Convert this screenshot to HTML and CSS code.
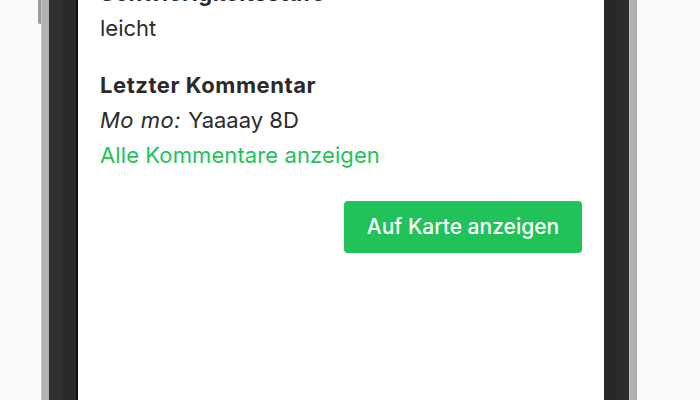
FILE: index.html
```html
<!DOCTYPE html>
<html lang="de">
<head>
<meta charset="utf-8">
<title>Details</title>
<link rel="stylesheet" href="styles.css">
</head>
<body>
<div class="stage">
  <div class="phone">
    <span class="side-button"></span>
    <div class="screen">
      <div class="content">
        <section class="field">
          <h3 class="label">Schwierigkeitsstufe</h3>
          <p class="value">leicht</p>
        </section>
        <section class="field field-comment">
          <h3 class="label">Letzter Kommentar</h3>
          <p class="value"><em class="author">Mo mo:</em> Yaaaay 8D</p>
          <a class="link" href="#">Alle Kommentare anzeigen</a>
        </section>
        <div class="actions">
          <button class="btn" type="button">Auf Karte anzeigen</button>
        </div>
      </div>
    </div>
  </div>
</div>
</body>
</html>
```

FILE: styles.css
```css
html, body {
  margin: 0;
  padding: 0;
  height: 100%;
  overflow: hidden;
}

body {
  background: #fafafa;
  font-family: Inter, "Noto Sans", sans-serif;
  color: #2c2c2c;
}

.stage {
  display: flex;
  height: 400px;
  padding-left: 41px;
}

.phone {
  position: relative;
  width: 596px;
  height: 400px;
  display: flex;
  box-sizing: border-box;
  padding: 0 33px 0 37px;
  background: linear-gradient(to right,
    #c6c6c6 0, #c6c6c6 1px,
    #b2b2b2 1px, #b2b2b2 8px,
    #303030 8px, #303030 22px,
    #292929 22px, #292929 35px,
    #0e0e0e 35px, #0e0e0e 37px,
    #ffffff 37px, #ffffff 563px,
    #262626 563px, #262626 575px,
    #2c2c2c 575px, #2c2c2c 588px,
    #bdbdbd 588px, #bdbdbd 589px,
    #b0b0b0 589px, #b0b0b0 595px,
    #a6a6a6 595px, #a6a6a6 596px);
}

.side-button {
  position: absolute;
  left: -3px;
  top: 0;
  width: 3px;
  height: 24px;
  background: #9c9c9c;
  border-radius: 0 0 0 2px;
}

.screen {
  flex: 1;
  background: #ffffff;
  display: flex;
  flex-direction: column;
  padding: 0 22px;
}

.content {
  margin-top: -24px;
  display: flex;
  flex-direction: column;
}

.field {
  display: flex;
  flex-direction: column;
}

.field-comment {
  margin-top: 22px;
}

.label {
  margin: 0;
  font-size: 22px;
  font-weight: 700;
  letter-spacing: 0.55px;
  line-height: 35px;
  color: #2a2a2a;
}

.value {
  margin: 0;
  font-size: 22px;
  font-weight: 400;
  line-height: 35px;
  color: #2c2c2c;
}

.author {
  font-style: italic;
  letter-spacing: 0.5px;
  margin-right: 1px;
}

.link {
  font-size: 22px;
  line-height: 35px;
  letter-spacing: 0.1px;
  color: #22c25b;
  text-decoration: none;
  align-self: flex-start;
}

.actions {
  display: flex;
  justify-content: flex-end;
  margin-top: 28px;
}

.btn {
  height: 52px;
  width: 238px;
  border: 0;
  border-radius: 4px;
  background: #22c25b;
  color: #ffffff;
  font-family: Inter, "Noto Sans", sans-serif;
  font-size: 21px;
  font-weight: 500;
  line-height: 52px;
  padding: 0;
  cursor: pointer;
}
```
